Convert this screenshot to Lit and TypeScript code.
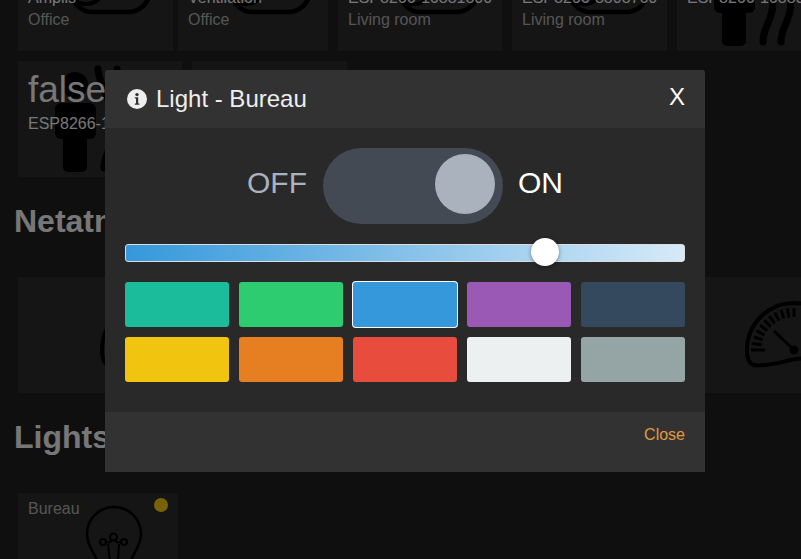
import { LitElement, css, html, nothing, svg } from "lit";
import { customElement } from "lit/decorators.js";

const toggleIcon = (left: number) => html`
  <svg class="icon" style="left:${left}px;top:20px" width="90" height="60" viewBox="0 0 90 60">
    <rect x="3" y="3" width="79" height="54" rx="22" fill="none" stroke="#000" stroke-width="4.5" />
    <circle cx="18" cy="30" r="19" fill="none" stroke="#000" stroke-width="4" />
  </svg>
`;

const heaterIcon = html`
  <svg class="icon" style="left:0;top:0" width="130" height="116" viewBox="0 0 130 116">
    <circle cx="57" cy="24" r="13" />
    <rect x="37" y="42" width="41" height="36" rx="6" />
    <rect x="45" y="70" width="24" height="41" rx="5" />
    <path
      d="M86 107C86 90 96 88 96 66C96 40 82 30 80 8M104 107C104 90 114 88 114 66C114 40 100 30 99 8"
      fill="none"
      stroke="#000"
      stroke-width="7"
      stroke-linecap="round"
    />
  </svg>
`;

const gaugeTicks = [9, 18, 27, 36, 45, 54, 63, 72, 81, 90];

const gaugeIcon = (left: number) => html`
  <svg class="icon" style="left:${left}px;top:20px" width="110" height="75" viewBox="0 0 110 75">
    <path
      d="M9 68C4 67 2 62 2 53A47 47 0 0 1 96 53C96 60 93 64 88 64C74 61 60 60 46 63C32 66 18 70 9 68Z"
      fill="none"
      stroke="#000"
      stroke-width="4"
    />
    <line x1="6" y1="53" x2="20" y2="53" stroke="#000" stroke-width="3" />
    <g stroke="#000" stroke-width="3">
      ${gaugeTicks.map(
        (deg) => svg`<line x1="7" y1="53" x2="16" y2="53" transform="rotate(${deg} 49 53)" />`
      )}
    </g>
    <path d="M29 34L49 53" stroke="#000" stroke-width="3" />
    <circle cx="49" cy="53" r="4.5" />
  </svg>
`;

const bulbIcon = html`
  <svg class="icon" style="left:66px;top:11px" width="60" height="66" viewBox="0 0 60 66">
    <path
      d="M14 58C10 48 3 42 3 30A27 27 0 0 1 57 30C57 42 50 48 46 58"
      fill="none"
      stroke="#000"
      stroke-width="2.5"
    />
    <g fill="none" stroke="#000" stroke-width="2">
      <circle cx="19" cy="38" r="3" />
      <circle cx="29.5" cy="33" r="3.5" />
      <circle cx="40" cy="38" r="3" />
      <path d="M24 40L26 58M35 40L34 58M22 38C25 39 27 38 28 36M37 38C34 39 32 38 31 36" />
    </g>
  </svg>
`;

const topCards = [
  { name: "Amplis", room: "Office", width: 155, tight: true, icon: toggleIcon(50) },
  { name: "Ventilation", room: "Office", width: 150, icon: toggleIcon(50) },
  { name: "ESP8266-16881800", room: "Living room", width: 164, icon: toggleIcon(58) },
  { name: "ESP8266-8808760", room: "Living room", width: 155, icon: toggleIcon(54) },
  { name: "ESP8266-16880000", room: "", width: 164, icon: heaterIcon },
];

const swatches = [
  "#1abc9c",
  "#2ecc71",
  "#3498db",
  "#9b59b6",
  "#34495e",
  "#f1c40f",
  "#e67e22",
  "#e74c3c",
  "#ecf0f1",
  "#95a5a6",
];

@customElement("app-root")
class AppRoot extends LitElement {
  private _card(c: { name: string; room: string; width: number; tight?: boolean; icon: unknown }, value = "") {
    return html`
      <div class="card ${c.tight ? "tight" : ""}" style="width:${c.width}px">
        ${c.icon}
        <div class="value">${value}</div>
        <div class="name">${c.name}</div>
        ${c.room ? html`<div class="room">${c.room}</div>` : nothing}
      </div>
    `;
  }

  protected render() {
    return html`
      <div class="page">
        <div class="row">${topCards.map((c) => this._card(c))}</div>
        <div class="row second">
          ${this._card({ name: "ESP8266-16880000", room: "", width: 164, icon: heaterIcon }, "false")}
          ${this._card({ name: "ESP8266-8808760", room: "", width: 155, icon: nothing }, "false")}
        </div>

        <h2>Netatmo</h2>
        <div class="row">
          <div class="card wide first">${gaugeIcon(82)}</div>
          <div class="card wide">${gaugeIcon(332)}</div>
        </div>

        <h2>Lights</h2>
        <div class="row">
          <div class="card light">
            ${bulbIcon}
            <span class="dot"></span>
            <div class="room">Bureau</div>
          </div>
        </div>
      </div>

      <div class="overlay"></div>

      <div class="modal">
        <header>
          <svg class="info" width="20" height="20" viewBox="0 0 20 20">
            <circle cx="10" cy="10" r="10" fill="#eee" />
            <circle cx="10" cy="5.6" r="1.7" fill="#333" />
            <path d="M7.8 8.2h3.4v6.2h1.2v1.4H7.8v-1.4H9V9.6H7.8z" fill="#333" />
          </svg>
          <span class="title">Light - Bureau</span>
          <span class="x">X</span>
        </header>

        <div class="body">
          <div class="switch">
            <span class="off">OFF</span>
            <div class="track"><div class="knob"></div></div>
            <span class="on">ON</span>
          </div>

          <div class="slider"><div class="thumb"></div></div>

          <div class="swatches">
            ${swatches.map(
              (color, i) =>
                html`<div class="swatch ${i === 2 ? "selected" : ""}" style="background:${color}"></div>`
            )}
          </div>
        </div>

        <footer><span class="close">Close</span></footer>
      </div>
    `;
  }

  static styles = css`
    :host {
      display: block;
      position: relative;
      height: 559px;
      overflow: hidden;
      background: #1e1e1e;
      font-family: "Liberation Sans", Arial, sans-serif;
      font-size: 16px;
    }

    .page {
      margin-top: -65px;
      padding-left: 18px;
    }

    .row {
      display: flex;
      gap: 10px;
    }

    .second {
      margin-top: 10px;
    }

    .card {
      position: relative;
      flex: none;
      box-sizing: border-box;
      height: 116px;
      padding: 5px 10px 0;
      background: #2a2a2a;
      overflow: hidden;
    }

    .tight {
      margin-right: -5px;
    }

    .wide {
      width: 388px;
      padding: 0;
    }

    .first {
      width: 385px;
    }

    .light {
      width: 160px;
    }

    .icon {
      position: absolute;
      fill: #000;
    }

    .value {
      position: relative;
      height: 47px;
      font-size: 37px;
      line-height: 48px;
      color: #eee;
    }

    .name,
    .room {
      position: relative;
      line-height: 22px;
      white-space: nowrap;
    }

    .name {
      color: #eee;
    }

    .room {
      color: #aaa;
    }

    .dot {
      position: absolute;
      top: 5px;
      right: 10px;
      width: 14px;
      height: 14px;
      border-radius: 50%;
      background: #f1c40f;
    }

    h2 {
      margin: 0 0 0 -4px;
      padding-top: 27px;
      height: 73px;
      font-size: 32px;
      line-height: 34px;
      font-weight: 700;
      color: #eee;
    }

    .overlay {
      position: absolute;
      inset: 0;
      background: rgba(0, 0, 0, 0.5);
    }

    .modal {
      position: absolute;
      left: 105px;
      top: 70px;
      width: 600px;
      background: #292929;
      border-radius: 3px 3px 0 0;
    }

    header {
      display: flex;
      align-items: center;
      box-sizing: border-box;
      height: 58px;
      padding: 0 20px 0 22px;
      background: #323232;
      border-radius: 3px 3px 0 0;
      color: #eee;
    }

    .info {
      flex: none;
      margin-right: 9px;
    }

    .title {
      flex: 1;
      font-size: 24px;
      line-height: 58px;
    }

    .x {
      margin-top: -4px;
      font-size: 24px;
      color: #fff;
    }

    .body {
      display: flex;
      flex-direction: column;
      gap: 20px;
      padding: 20px 20px 30px;
    }

    .switch {
      display: flex;
      align-items: center;
      justify-content: center;
      gap: 15px;
      font-size: 30px;
      height: 76px;
    }

    .off {
      color: #aab2bd;
      margin-right: 1px;
      margin-top: -6px;
    }

    .on {
      color: #fff;
      margin-top: -6px;
    }

    .track {
      position: relative;
      width: 180px;
      height: 76px;
      border-radius: 38px;
      background: #434a54;
    }

    .knob {
      position: absolute;
      top: 6px;
      right: 8px;
      width: 60px;
      height: 60px;
      border-radius: 50%;
      background: #aab2bd;
    }

    .slider {
      position: relative;
      box-sizing: border-box;
      height: 18px;
      border: 1px solid #ddd;
      border-radius: 3px;
      background: linear-gradient(to right, #3498db, #d6eaf8);
    }

    .thumb {
      position: absolute;
      top: -7px;
      left: 405px;
      width: 28px;
      height: 28px;
      border-radius: 50%;
      background: #fff;
      box-shadow: 0 1px 4px rgba(0, 0, 0, 0.4);
    }

    .swatches {
      display: grid;
      grid-template-columns: repeat(5, 1fr);
      gap: 10px;
    }

    .swatch {
      height: 45px;
      border-radius: 3px;
    }

    .selected {
      box-shadow: 0 0 0 1px #fff;
    }

    footer {
      display: flex;
      justify-content: flex-end;
      box-sizing: border-box;
      height: 60px;
      padding: 14px 20px 0;
      background: #323232;
    }

    .close {
      color: #e09a40;
      line-height: 18px;
    }
  `;
}

declare global {
  interface HTMLElementTagNameMap {
    "app-root": AppRoot;
  }
}
